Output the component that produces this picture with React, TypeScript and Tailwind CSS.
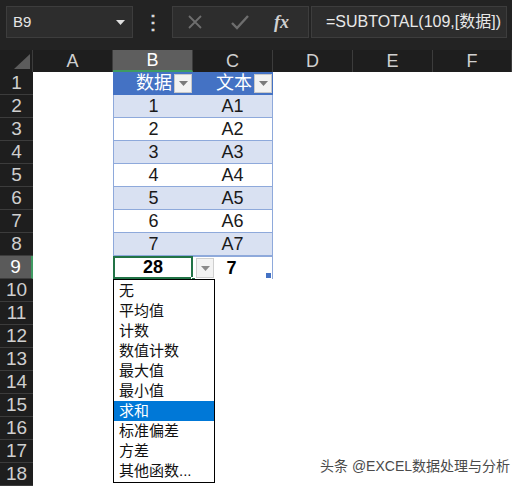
import React from "react";

const COLS = ["A", "B", "C", "D", "E", "F"];
const DATA = [1, 2, 3, 4, 5, 6, 7];
const MENU = ["无", "平均值", "计数", "数值计数", "最大值", "最小值", "求和", "标准偏差", "方差", "其他函数..."];

const font = "font-['Liberation_Sans','Noto_Sans_CJK_SC',sans-serif]";

function Caret({ className = "" }: { className?: string }) {
  return (
    <svg width="9" height="5" viewBox="0 0 9 5" className={className}>
      <path d="M0 0h9L4.5 5z" fill="currentColor" />
    </svg>
  );
}

function FilterBtn() {
  return (
    <div className="absolute right-[1px] top-[2px] w-[18px] h-[19px] bg-[#f2f2f2] border border-[#c8c8c8] flex items-center justify-center text-[#7a7a7a]">
      <Caret />
    </div>
  );
}

function RowHead({ n, active }: { n: number; active?: boolean }) {
  return (
    <div
      className={`h-[23px] flex items-center justify-center text-[19px] font-light border-b border-[#3c3c3c] ${
        active ? "bg-[#5a5a5a] text-white border-r-2 border-r-[#3f9a62]" : "bg-[#1e1e1e] text-[#cfcfcf]"
      }`}
    >
      {n}
    </div>
  );
}

export default function App() {
  return (
    <div className={`relative w-[512px] h-[487px] overflow-hidden bg-white ${font}`}>
      {/* formula bar */}
      <div className="h-[50px] bg-[#232323] flex items-start pt-[6px] pl-[6px] gap-[2px]">
        <div className="w-[127px] h-[32px] bg-[#2d2d2d] border border-[#3d3d3d] flex items-center justify-between px-[6px] text-[15px] text-[#e6e6e6]">
          <span>B9</span>
          <Caret className="text-[#e0e0e0] mr-[1px]" />
        </div>
        <div className="w-[35px] h-[32px] flex items-center justify-center text-[#d8d8d8] text-[20px] font-bold leading-none">⋮</div>
        <div className="w-[137px] h-[32px] bg-[#2d2d2d] border border-[#3d3d3d] flex items-center text-[#6e6e6e]">
          <svg width="18" height="18" viewBox="0 0 18 18" className="ml-[13px]">
            <path d="M3 3l12 12M15 3L3 15" stroke="currentColor" strokeWidth="1.8" />
          </svg>
          <svg width="20" height="18" viewBox="0 0 20 18" className="ml-[26px]">
            <path d="M2 10l5 5L18 3" stroke="currentColor" strokeWidth="2.4" fill="none" />
          </svg>
          <span className="ml-[24px] text-[#d0d0d0] italic font-['Liberation_Serif',serif] text-[18px] font-bold">fx</span>
        </div>
        <div className="w-[196px] h-[32px] bg-[#2d2d2d] border border-[#3d3d3d] flex items-center pl-[14px] text-[16px] text-[#e8e8e8] whitespace-nowrap">
          =SUBTOTAL(109,[数据])
        </div>
      </div>

      {/* sheet grid */}
      <div className="grid grid-cols-[33px_80px_80px_80px_80px_80px_79px]">
        {/* column headers */}
        <div className="h-[22px] bg-[#1e1e1e] border-r border-[#3c3c3c] relative">
          <svg width="16" height="15" viewBox="0 0 16 15" className="absolute right-[2px] bottom-[3px]">
            <path d="M16 0v15H0z" fill="#5c5c5c" />
          </svg>
        </div>
        {COLS.map((c) => (
          <div
            key={c}
            className={`h-[22px] flex items-center justify-center text-[18px] border-r ${
              c === "B"
                ? "bg-[#5e5e5e] text-white border-b-2 border-b-[#3f9a62] border-r-[#3c3c3c]"
                : "bg-[#1e1e1e] text-[#d0d0d0] border-[#3c3c3c]"
            }`}
          >
            {c}
          </div>
        ))}

        {/* row 1 header of table */}
        <RowHead n={1} />
        <div className="h-[23px]" />
        <div className="h-[23px] bg-[#4472c4] relative flex items-center justify-end pr-[21px] text-white text-[18px]">
          数据
          <FilterBtn />
        </div>
        <div className="h-[23px] bg-[#4472c4] relative flex items-center justify-end pr-[21px] text-white text-[18px]">
          文本
          <FilterBtn />
        </div>
        <div className="h-[23px] col-span-3" />

        {/* data rows */}
        {DATA.map((v, i) => {
          const band = i % 2 === 0 ? "bg-[#d9e1f2]" : "bg-white";
          return (
            <React.Fragment key={v}>
              <RowHead n={i + 2} />
              <div className="h-[23px]" />
              <div className={`h-[23px] ${band} border-b border-l border-[#8ea9db] flex items-center justify-center text-[18px] text-[#1a1a1a]`}>
                {v}
              </div>
              <div className={`h-[23px] ${band} border-b border-r border-[#8ea9db] flex items-center justify-center text-[18px] text-[#1a1a1a]`}>
                A{v}
              </div>
              <div className="h-[23px] col-span-3" />
            </React.Fragment>
          );
        })}

        {/* total row */}
        <RowHead n={9} active />
        <div className="h-[23px]" />
        <div className="h-[23px] relative border-t border-[#4472c4]">
          <div className="absolute inset-x-0 top-[-1px] bottom-0 border-2 border-[#217346] flex items-center justify-center text-[18px] font-bold text-black">
            28
          </div>
          <div className="absolute right-[-3px] bottom-[-3px] w-[5px] h-[5px] bg-[#217346] border border-white" />
          <div className="absolute right-[-21px] top-[1px] w-[18px] h-[20px] bg-[#f3f3f3] border border-[#cfcfcf] flex items-center justify-center text-[#8a8a8a]">
            <Caret />
          </div>
        </div>
        <div className="h-[23px] relative border-t border-r border-[#8ea9db] flex items-center justify-center pr-[2px] text-[18px] font-bold text-black">
          7
          <div className="absolute right-[1px] bottom-[1px] w-[5px] h-[5px] bg-[#4472c4]" />
        </div>
        <div className="h-[23px] col-span-3" />

        {/* empty rows */}
        {Array.from({ length: 9 }, (_, i) => (
          <React.Fragment key={i}>
            <RowHead n={i + 10} />
            <div className="h-[23px] col-span-6" />
          </React.Fragment>
        ))}
      </div>

      {/* subtotal menu */}
      <div className="absolute left-[113px] top-[279px] w-[102px] bg-white border border-black py-[1px]">
        {MENU.map((m) => (
          <div
            key={m}
            className={`h-[20px] flex items-center pl-[5px] text-[15px] ${
              m === "求和" ? "bg-[#0078d7] text-white" : "text-[#111]"
            }`}
          >
            {m}
          </div>
        ))}
      </div>

      {/* watermark */}
      <div className="absolute left-[320px] top-[456px] text-[14px] text-[#4a4a4a] [text-shadow:0_0_2px_#fff,1px_1px_1px_#fff] whitespace-nowrap">
        头条 @EXCEL数据处理与分析
      </div>
    </div>
  );
}
